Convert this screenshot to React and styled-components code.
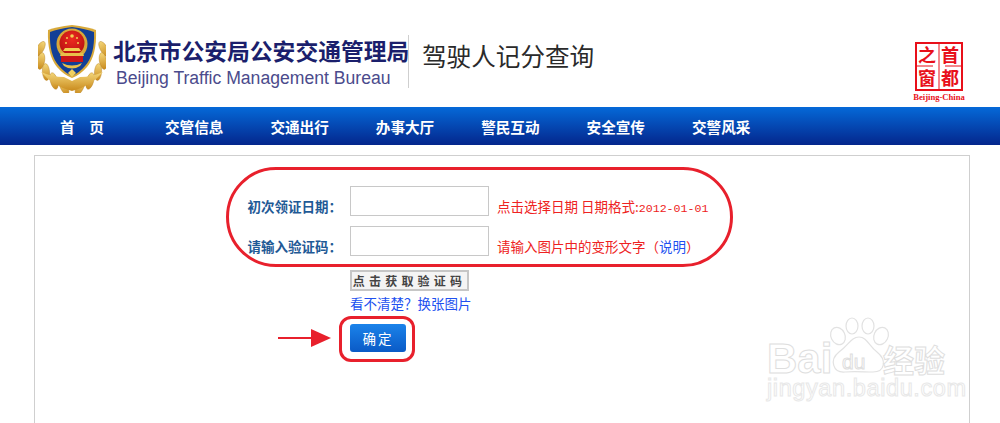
import React from 'react';
import styled, { createGlobalStyle } from 'styled-components';

const Global = createGlobalStyle`
  html, body { margin: 0; padding: 0; background: #fff; overflow: hidden; }
  body { font-family: "Noto Sans CJK SC", "Liberation Sans", sans-serif; }
`;
const Page = styled.div`width: 1000px; height: 423px; overflow: hidden; position: relative;`;
const Header = styled.header`height: 107px; display: flex; align-items: flex-start; padding-left: 38px; box-sizing: border-box;`;
const Emblem = styled.svg`width: 68px; height: 68px; margin-top: 25px; flex: none;`;
const Brand = styled.div`margin: 36px 0 0 7px; width: 295px; flex: none;`;
const BrandCn = styled.div`font-size: 22.8px; line-height: 30px; font-weight: 700; color: #1b1f6c; white-space: nowrap; letter-spacing: 0;`;
const BrandEn = styled.div`font-family: "Liberation Sans", sans-serif; font-size: 17.6px; line-height: 24px; color: #4b4b8c; margin: 0 0 0 3px; white-space: nowrap;`;
const Divider = styled.div`width: 1px; height: 53px; background: #cfcfcf; margin-top: 35px; flex: none;`;
const PageTitle = styled.h1`margin: 36px 0 0 13px; font-size: 24.6px; line-height: 38px; font-weight: 400; color: #2a2a2a; white-space: nowrap;`;
const Seal = styled.svg`width: 60px; height: 64px; margin: 40px 0 0 auto; margin-right: 31px; flex: none;`;
const Nav = styled.nav`height: 38px; background: linear-gradient(#0569d8, #04268c); display: flex; align-items: center; padding-left: 60px; gap: 47px;`;
const NavItem = styled.a`font-size: 14.6px; font-weight: 700; color: #fff; white-space: nowrap; ${p => p.$first && 'width: 58px; margin-right: 0; white-space: pre;'}`;
const Panel = styled.main`position: relative; margin: 10px 0 0 34px; width: 934px; height: 320px; border: 1px solid #cfcfcf; box-sizing: content-box; padding-top: 30px;`;
const Form = styled.form`padding-left: 200px; display: grid; grid-template-columns: 107px 139px auto; column-gap: 8px; row-gap: 10px; align-items: center; justify-content: start;`;
const Label = styled.label`font-size: 13.5px; font-weight: 700; color: #1f5a96; text-align: right; padding-top: 10px; white-space: nowrap;`;
const Input = styled.input`width: 139px; height: 30px; box-sizing: border-box; border: 1px solid #c8c8c8; background: #fff; outline: none; padding: 0;`;
const Hint = styled.span`font-size: 13.5px; color: #ee2222; padding-top: 10px; white-space: nowrap; display: block;`;
const Mono = styled.span`font-family: "Liberation Mono", monospace; font-size: 11.6px;`;
const HelpLink = styled.a`color: #2050f0;`;
const Column = styled.div`grid-column: 2 / 4; display: flex; flex-direction: column; align-items: flex-start; margin-top: 4px;`;
const Captcha = styled.div`width: 119px; height: 21px; box-sizing: border-box; border: 2px solid #c6c6c6; background: #f4f4f4; color: #444; font-size: 12px; font-weight: 700; letter-spacing: 4.2px; line-height: 17px; text-align: center; white-space: nowrap; overflow: hidden;`;
const Refresh = styled.a`font-size: 13.5px; line-height: 20px; color: #2050f0; margin-top: 2px; white-space: nowrap;`;
const Submit = styled.button`width: 56px; height: 28px; margin-top: 11px; border: 0; border-radius: 3px; background: linear-gradient(#1b83ea, #0a5ac6); color: #fff; font: 400 13.5px "Noto Sans CJK SC", sans-serif; letter-spacing: 2px; padding: 0;`;
const Ring = styled.div`position: absolute; box-sizing: border-box; border: 3px solid #e8202c; pointer-events: none;
  left: ${p => p.$x}px; top: ${p => p.$y}px; width: ${p => p.$w}px; height: ${p => p.$h}px; border-radius: ${p => p.$r}px;`;
const Arrow = styled.svg`position: absolute; left: 243px; top: 172px; width: 54px; height: 20px;`;
const Watermark = styled.div`position: absolute; left: 767px; top: 320px; width: 185px; height: 82px; color: #fff; pointer-events: none;`;
const Mark = styled.svg`position: absolute; left: 0; top: 0; width: 185px; height: 82px; overflow: visible;`;

const leaves = [[-34,14,-30],[-33,26,-50],[-28,37,-65],[-20,46,-75],[-10,52,-85]];

const EmblemArt = () => (
  <Emblem viewBox="0 0 68 68">
    <defs>
      <linearGradient id="gold" x1="0" y1="0" x2="0" y2="1"><stop offset="0" stopColor="#f4d77a"/><stop offset="1" stopColor="#c98a1c"/></linearGradient>
      <radialGradient id="redg" cx=".5" cy=".35" r=".7"><stop offset="0" stopColor="#ee2a20"/><stop offset="1" stopColor="#b3100f"/></radialGradient>
    </defs>
    <g transform="translate(34 0)">
      {leaves.map(([x,y,a],i)=>(
        <g key={i}>
          <ellipse cx={x+2} cy={y+10} rx="3.6" ry="8.5" fill="url(#gold)" stroke="#b37c1a" strokeWidth=".4" transform={`rotate(${a+60} ${x+2} ${y+10})`}/>
          <ellipse cx={-x-2} cy={y+10} rx="3.6" ry="8.5" fill="url(#gold)" stroke="#b37c1a" strokeWidth=".4" transform={`rotate(${-a-60} ${-x-2} ${y+10})`}/>
        </g>
      ))}
      <path d="M-31 47 Q-18 62 0 66 Q18 62 31 47 Q20 52 8 52 L0 56 L-8 52 Q-20 52 -31 47Z" fill="url(#gold)"/>
      <path d="M0 0 Q-16 2 -24 5 Q-25 30 -15 42 Q-8 50 0 53 Q8 50 15 42 Q25 30 24 5 Q16 2 0 0Z" fill="#d8a93a"/>
      <path d="M0 2 Q-14 4 -22 7 Q-23 30 -13 41 Q-7 48 0 51 Q7 48 13 41 Q23 30 22 7 Q14 4 0 2Z" fill="#123f96"/>
      <circle cx="0" cy="19" r="15.5" fill="#d8a93a"/>
      <circle cx="0" cy="18" r="12.5" fill="url(#redg)"/>
      <g fill="#f2cf52">
        <circle cx="0" cy="11" r="1.8"/><circle cx="-5" cy="13" r="1"/><circle cx="5" cy="13" r="1"/><circle cx="-6" cy="18" r="1"/><circle cx="6" cy="18" r="1"/>
        <path d="M-7 23 H7 L9 26 H-9Z"/>
      </g>
      <path d="M-11 31 H11 V37 H-11Z" fill="#c9151a"/>
      <path d="M-11 28 H11 L12 31 H-12Z" fill="#e8c04a"/>
      <path d="M-10 38 Q0 43 10 38 L8 41 Q0 46 -8 41Z" fill="#e8c04a"/>
      <path d="M0 44 L4 48 L0 52 L-4 48Z" fill="#f0d060"/>
    </g>
  </Emblem>
);

const SealArt = () => (
  <Seal viewBox="0 0 60 64">
    <rect x="7" y="3" width="46" height="47" fill="#fff" stroke="#e8101a" strokeWidth="2"/>
    <path d="M30 3V50M8 26H24M36 26H52" stroke="#e8101a" strokeWidth="1" fill="none"/>
    <g fill="#e8101a" fontFamily='"Noto Sans CJK SC", sans-serif' fontSize="18" fontWeight="700" textAnchor="middle">
      <text x="18" y="22">之</text><text x="41" y="22">首</text>
      <text x="18" y="45">窗</text><text x="41" y="45">都</text>
    </g>
    <text x="30" y="60" fill="#e8101a" fontFamily='"Liberation Serif", serif' fontSize="8.6" fontWeight="700" textAnchor="middle">Beijing-China</text>
  </Seal>
);

const WatermarkArt = () => (
  <Watermark>
    <Mark viewBox="0 0 185 82">
      <g fill="#fff" stroke="#e2e2e2" strokeWidth="1.2">
        <ellipse cx="71" cy="16" rx="7" ry="9" transform="rotate(-25 71 16)"/>
        <ellipse cx="85" cy="6" rx="6" ry="8"/>
        <ellipse cx="101" cy="6" rx="6" ry="8"/>
        <ellipse cx="114" cy="16" rx="7" ry="9" transform="rotate(25 114 16)"/>
        <path d="M92 17 C100 17 102 26 110 32 C120 40 118 52 106 52 C98 52 86 51 78 52 C66 53 62 40 72 32 C82 25 84 17 92 17Z"/>
      </g>
      <g fontFamily='"Liberation Sans", sans-serif' fill="#fff" stroke="#dedede" strokeWidth="1">
        <text x="0" y="53" fontSize="42" fontWeight="700" letterSpacing="0">Bai</text>
        <text x="75" y="49" fontSize="21" fontWeight="400">du</text>
        <text x="0" y="76" fontSize="23.5" fontWeight="400" stroke="#e8e8e8" letterSpacing=".6">jingyan.baidu.com</text>
      </g>
      <g fontFamily='"Noto Sans CJK SC", sans-serif' fill="#fff" stroke="#dedede" strokeWidth="1" fontWeight="700">
        <text x="116" y="52" fontSize="31">经验</text>
      </g>
    </Mark>
  </Watermark>
);

export default function App() {
  const items = ['交管信息','交通出行','办事大厅','警民互动','安全宣传','交警风采'];
  return (
    <Page>
      <Global/>
      <Header>
        <EmblemArt/>
        <Brand>
          <BrandCn>北京市公安局公安交通管理局</BrandCn>
          <BrandEn>Beijing Traffic Management Bureau</BrandEn>
        </Brand>
        <Divider/>
        <PageTitle>驾驶人记分查询</PageTitle>
        <SealArt/>
      </Header>
      <Nav>
        <NavItem $first>首　页</NavItem>
        {items.map(t => <NavItem key={t}>{t}</NavItem>)}
      </Nav>
      <Panel>
        <Form>
          <Label>初次领证日期：</Label>
          <Input/>
          <Hint>点击选择日期 日期格式:<Mono>2012-01-01</Mono></Hint>
          <Label>请输入验证码：</Label>
          <Input/>
          <Hint>请输入图片中的变形文字（<HelpLink>说明</HelpLink>）</Hint>
          <span/>
          <Column>
            <Captcha>点击获取验证码</Captcha>
            <Refresh>看不清楚？换张图片</Refresh>
            <Submit type="button">确定</Submit>
          </Column>
        </Form>
        <Ring $x={191} $y={11} $w={507} $h={100} $r={50}/>
        <Ring $x={304} $y={160} $w={76} $h={46} $r={12}/>
        <Arrow viewBox="0 0 54 20">
          <path d="M0 10H34" stroke="#e8202c" strokeWidth="2"/>
          <path d="M33 1L53 10L33 19Z" fill="#e8202c"/>
        </Arrow>
      </Panel>
      <WatermarkArt/>
    </Page>
  );
}
